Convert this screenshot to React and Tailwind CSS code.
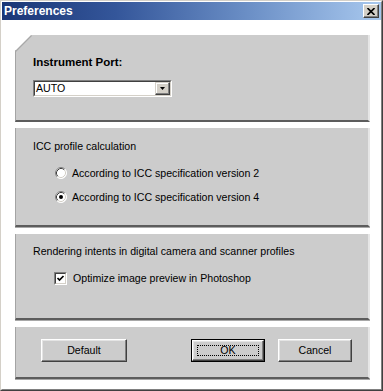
function Panel({ className = "", children, chamfer = false }) {
  return (
    <div
      className={`relative bg-[#cccccc] border-l border-l-[#a4a4a4] border-r-2 border-r-[#e6e6e6] border-b-2 border-b-[#5c5c5c] shadow-[0_1px_0_#a8a8a8] ${
        chamfer ? "[clip-path:polygon(16px_0,100%_0,100%_100%,0_100%,0_16px)]" : ""
      } ${className}`}
    >
      {chamfer && (
        <svg className="absolute left-[-1px] top-0" width="18" height="18" viewBox="0 0 18 18">
          <line x1="0.5" y1="16.5" x2="16.5" y2="0.5" stroke="#a8a8a8" strokeWidth="1.2" />
        </svg>
      )}
      {children}
    </div>
  );
}

function Radio({ checked }) {
  return (
    <svg width="12" height="12" viewBox="0 0 12 12" className="shrink-0">
      <circle cx="6" cy="6" r="5.5" fill="#ffffff" />
      <path d="M2.11 9.89 A5.5 5.5 0 0 1 9.89 2.11" stroke="#808080" fill="none" />
      <path d="M9.89 2.11 A5.5 5.5 0 0 1 2.11 9.89" stroke="#ffffff" fill="none" />
      <path d="M2.82 9.18 A4.5 4.5 0 0 1 9.18 2.82" stroke="#404040" fill="none" />
      <path d="M9.18 2.82 A4.5 4.5 0 0 1 2.82 9.18" stroke="#d4d0c8" fill="none" />
      {checked && <circle cx="6" cy="6" r="2" fill="#000000" />}
    </svg>
  );
}

function Checkbox({ checked }) {
  return (
    <div className="w-[13px] h-[13px] shrink-0 border border-t-[#808080] border-l-[#808080] border-r-white border-b-white">
      <div className="w-full h-full bg-white border border-t-[#404040] border-l-[#404040] border-r-[#d4d0c8] border-b-[#d4d0c8]">
        {checked && (
          <svg width="9" height="9" viewBox="0 0 9 9">
            <path d="M1.5 4 L3.5 6 L7.5 2" stroke="#000" strokeWidth="1.7" fill="none" />
          </svg>
        )}
      </div>
    </div>
  );
}

function Button({ children, className = "", isDefault = false }) {
  const inner = (
    <div className="w-full h-full flex items-center justify-center bg-[#cccccc] border border-t-white border-l-white border-r-[#404040] border-b-[#404040] shadow-[inset_-1px_-1px_0_#808080,inset_1px_1px_0_#e4e4e4]">
      {isDefault ? (
        <div className="w-[calc(100%-8px)] h-[calc(100%-8px)] flex items-center justify-center border border-dotted border-black">
          {children}
        </div>
      ) : (
        children
      )}
    </div>
  );
  return (
    <div className={`h-[23px] text-[10.6px] leading-none ${isDefault ? "border border-black" : ""} ${className}`}>
      {inner}
    </div>
  );
}

export default function App() {
  return (
    <div className="w-[383px] h-[391px] font-['Liberation_Sans',Arial,sans-serif] text-black">
      <div className="w-full h-full flex flex-col border border-t-[#d4d0c8] border-l-[#d4d0c8] border-r-[#404040] border-b-[#404040]">
        <div className="flex-1 flex flex-col bg-white border border-t-white border-l-white border-r-[#808080] border-b-[#808080]">
          {/* Title bar */}
          <div className="h-[18px] shrink-0 flex items-center justify-between pl-[2px] pr-[2px] bg-[linear-gradient(to_right,#1a3676_0%,#34569a_30%,#6b8fc6_65%,#a8c8ee_100%)]">
            <span className="text-white font-bold text-[12px] leading-none">Preferences</span>
            <div className="w-[16px] h-[14px] bg-[#d4d0c8] border border-t-white border-l-white border-r-[#404040] border-b-[#404040] shadow-[inset_-1px_-1px_0_#808080] flex items-center justify-center">
              <svg width="8" height="7" viewBox="0 0 8 7">
                <path d="M0.5 0 L7.5 7 M7.5 0 L0.5 7" stroke="#000" strokeWidth="1.6" />
              </svg>
            </div>
          </div>

          {/* Body */}
          <div className="flex-1 flex flex-col pl-[13px] pr-[11px] pt-[15px]">
            <Panel chamfer className="h-[87px] pl-[17px] pt-[20px]">
              <div className="text-[11.5px] leading-[14px] font-bold">Instrument Port:</div>
              <div className="mt-[11px] w-[139px] h-[17px] border border-t-[#808080] border-l-[#808080] border-r-white border-b-white">
                <div className="w-full h-full bg-white flex items-center justify-between border border-t-[#404040] border-l-[#404040] border-r-[#d4d0c8] border-b-[#d4d0c8]">
                  <span className="pl-[1px] text-[10.6px] leading-none">AUTO</span>
                  <div className="w-[15px] h-full bg-[#d4d0c8] border border-t-[#d4d0c8] border-l-[#d4d0c8] border-r-[#404040] border-b-[#404040] shadow-[inset_-1px_-1px_0_#808080,inset_1px_1px_0_#ffffff] flex items-center justify-center">
                    <svg width="5" height="3" viewBox="0 0 5 3">
                      <path d="M0 0 H5 L2.5 3 Z" fill="#000" />
                    </svg>
                  </div>
                </div>
              </div>
            </Panel>

            <Panel className="mt-[6px] h-[99px] pl-[17px] pt-[12px]">
              <div className="text-[10.6px] leading-[13px]">ICC profile calculation</div>
              <div className="mt-[14px] ml-[22px] flex flex-col gap-[12px]">
                <div className="h-[12px] flex items-center gap-[5px]">
                  <Radio />
                  <span className="text-[10.6px] leading-none">According to ICC specification version 2</span>
                </div>
                <div className="h-[12px] flex items-center gap-[5px]">
                  <Radio checked />
                  <span className="text-[10.6px] leading-none">According to ICC specification version 4</span>
                </div>
              </div>
            </Panel>

            <Panel className="mt-[7px] h-[86px] pl-[17px] pt-[11px]">
              <div className="text-[10.6px] leading-[13px]">Rendering intents in digital camera and scanner profiles</div>
              <div className="mt-[14px] ml-[21px] h-[13px] flex items-center gap-[6px]">
                <Checkbox checked />
                <span className="text-[10.6px] leading-none">Optimize image preview in Photoshop</span>
              </div>
            </Panel>

            <Panel className="mt-[7px] h-[52px] pl-[25px] pt-[12px] flex items-start">
              <Button className="w-[86px]">Default</Button>
              <Button isDefault className="w-[74px] ml-[64px]">OK</Button>
              <Button className="w-[74px] ml-[13px]">Cancel</Button>
            </Panel>
          </div>
        </div>
      </div>
    </div>
  );
}
